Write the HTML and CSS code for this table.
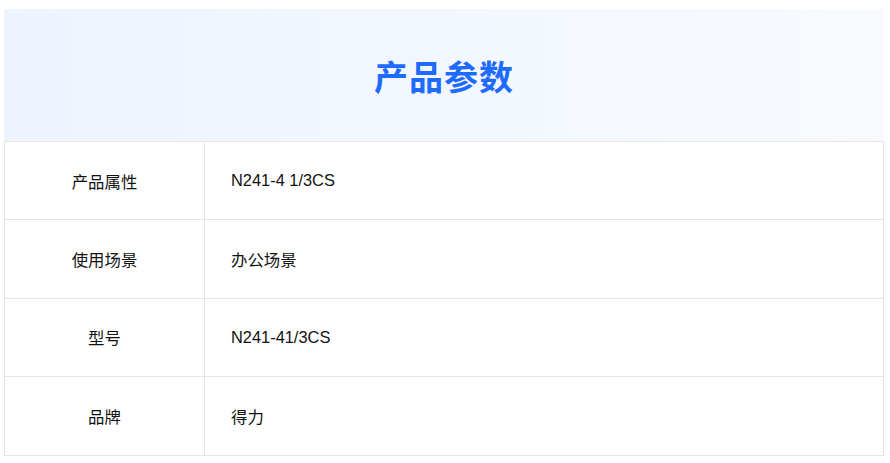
FILE: index.html
```html
<!DOCTYPE html>
<html lang="zh">
<head>
<meta charset="utf-8">
<link rel="stylesheet" href="styles.css">
</head>
<body>
<div class="wrap">
  <div class="head"><h1 class="title">产品参数</h1></div>
  <div class="table">
    <div class="row"><div class="k">产品属性</div><div class="v">N241-4 1/3CS</div></div>
    <div class="row"><div class="k">使用场景</div><div class="v">办公场景</div></div>
    <div class="row"><div class="k">型号</div><div class="v">N241-41/3CS</div></div>
    <div class="row"><div class="k">品牌</div><div class="v">得力</div></div>
  </div>
</div>
</body>
</html>
```
FILE: styles.css
```css
html, body { margin: 0; padding: 0; background: #fff; }
body {
  font-family: "Liberation Sans", "Noto Sans CJK SC", sans-serif;
  color: #111;
  padding: 9px 6px 0 4px;
}
.wrap { width: 880px; }
.head {
  height: 132px;
  display: flex;
  align-items: center;
  justify-content: center;
  background: linear-gradient(90deg, #edf4ff 0%, #f8faff 100%);
}
.title {
  margin: 0;
  font-size: 34px;
  font-weight: 700;
  color: #1f6bff;
  font-family: "Noto Sans CJK SC", sans-serif;
  letter-spacing: 1px;
}
.table {
  border: 1px solid #e6e6e6;
}
.row {
  box-sizing: border-box;
  display: flex;
  height: 78.25px;
  border-bottom: 1px solid #e6e6e6;
  font-size: 16.4px;
}
.row:last-child { border-bottom: none; }
.k {
  width: 199px;
  border-right: 1px solid #e6e6e6;
  display: flex;
  align-items: center;
  justify-content: center;
}
.v {
  flex: 1;
  display: flex;
  align-items: center;
  padding-left: 26px;
}
```
